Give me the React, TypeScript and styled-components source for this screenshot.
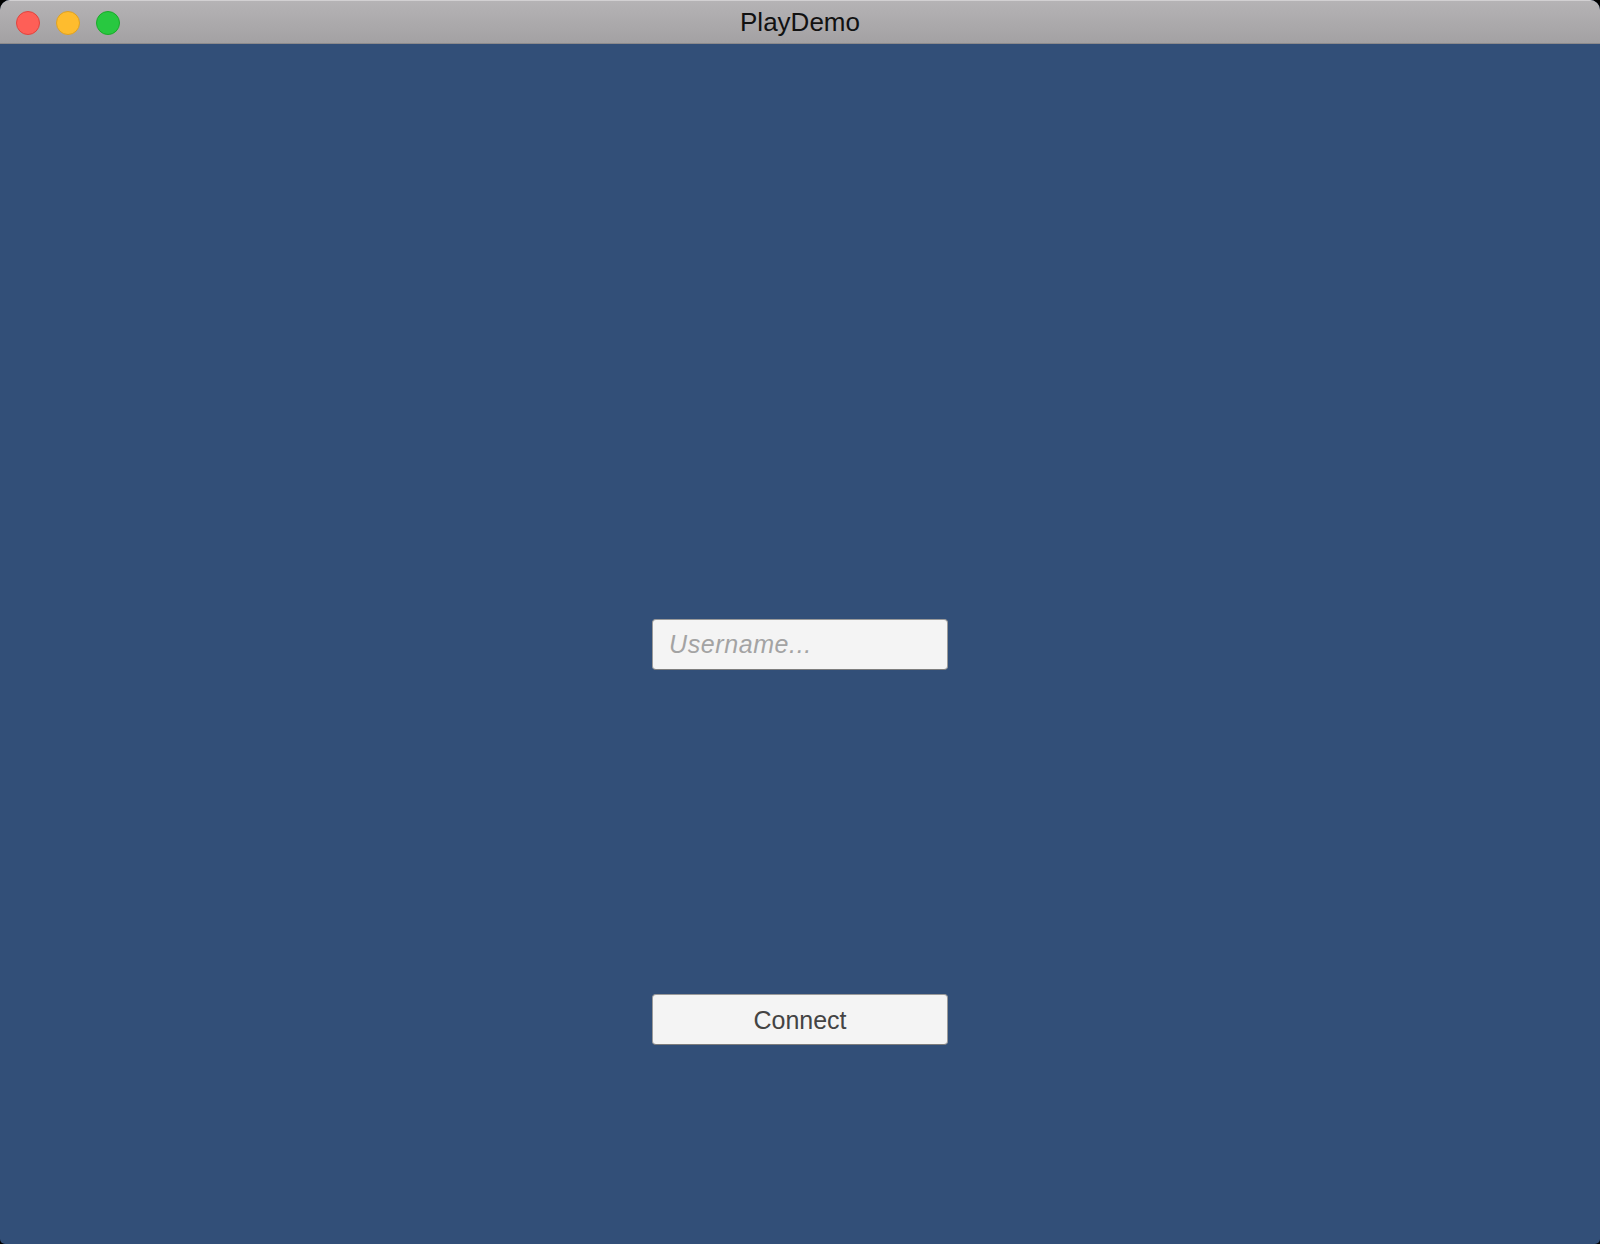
import { FC } from 'react'
import styled, { createGlobalStyle } from 'styled-components'

const GlobalStyle = createGlobalStyle`
  html, body {
    margin: 0;
    padding: 0;
    background: #000;
    font-family: "Liberation Sans", Arial, sans-serif;
  }
`

const Window = styled.div`
  width: 1600px;
  height: 1244px;
  display: flex;
  flex-direction: column;
  border-radius: 10px 10px 5px 5px;
  overflow: hidden;
  background: #324f78;
`

const TitleBar = styled.header`
  position: relative;
  height: 44px;
  flex-shrink: 0;
  display: flex;
  align-items: center;
  justify-content: center;
  background: linear-gradient(#b5b3b5, #a3a1a3);
  border-top: 1px solid #d2d0d2;
  border-bottom: 1px solid #8c8a8c;
  box-sizing: border-box;
`

const Lights = styled.div`
  position: absolute;
  left: 16px;
  top: 10px;
  display: flex;
  gap: 16px;
`

const Light = styled.span<{ $fill: string; $edge: string }>`
  width: 22px;
  height: 22px;
  border-radius: 50%;
  background: ${(p) => p.$fill};
  border: 1px solid ${(p) => p.$edge};
`

const Title = styled.h1`
  margin: 0;
  font-size: 26px;
  font-weight: normal;
  color: #111;
`

const Content = styled.main`
  flex: 1;
  display: flex;
  flex-direction: column;
  align-items: center;
  padding-top: 575px;
  gap: 324px;
`

const Field = styled.input`
  box-sizing: border-box;
  width: 296px;
  height: 51px;
  padding: 0 16px;
  background: #f4f4f4;
  border: 1px solid #9a9a9a;
  border-bottom-color: #7d7d7d;
  border-radius: 4px;
  font-family: "Liberation Sans", Arial, sans-serif;
  font-size: 25px;
  letter-spacing: 0.6px;
  color: #333;
  outline: none;

  &::placeholder {
    color: #a3a3a3;
    font-style: italic;
  }
`

const Button = styled.button`
  box-sizing: border-box;
  width: 296px;
  height: 51px;
  background: #f4f4f4;
  border: 1px solid #9a9a9a;
  border-bottom-color: #7d7d7d;
  border-radius: 4px;
  font-family: "Liberation Sans", Arial, sans-serif;
  font-size: 25px;
  color: #444;
  padding: 2px 0 0;
`

const App: FC = () => (
  <>
    <GlobalStyle />
    <Window>
      <TitleBar>
        <Lights>
          <Light $fill="#fe5f57" $edge="#e0443e" />
          <Light $fill="#febc2e" $edge="#dea123" />
          <Light $fill="#28c840" $edge="#1aab29" />
        </Lights>
        <Title>PlayDemo</Title>
      </TitleBar>
      <Content>
        <Field placeholder="Username..." />
        <Button>Connect</Button>
      </Content>
    </Window>
  </>
)

export default App
